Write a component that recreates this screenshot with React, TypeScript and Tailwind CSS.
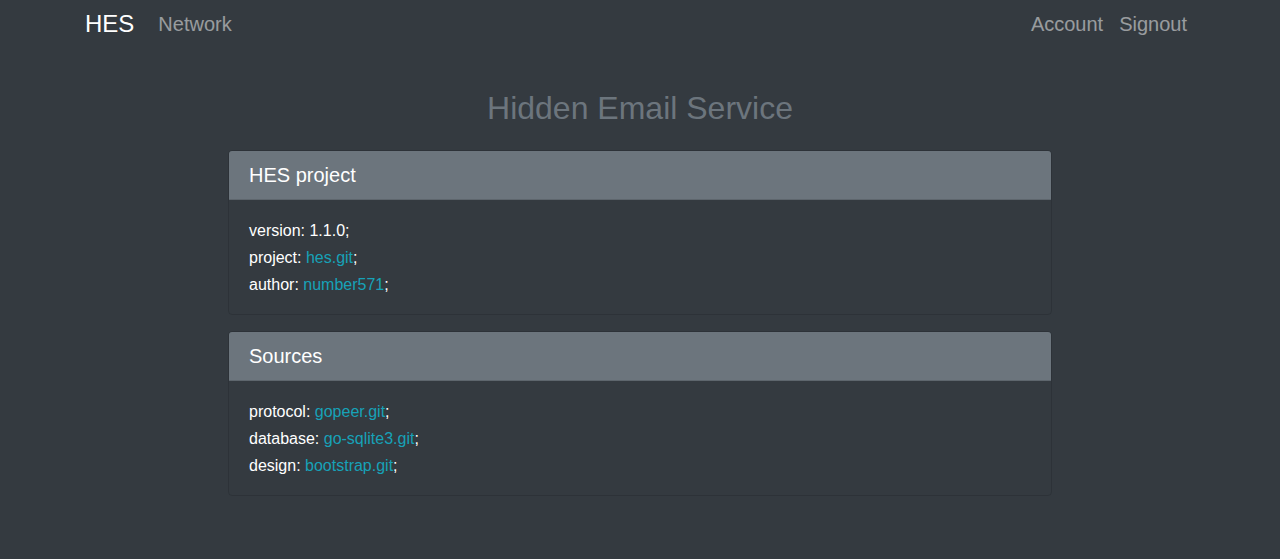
import React from "react";

const font = { fontFamily: '"Liberation Sans", Arial, sans-serif' };

function Card({ title, rows }: { title: string; rows: { k: string; v: string; link?: boolean }[] }) {
  return (
    <div className="w-[824px] mx-auto rounded-[4px] border border-[rgba(0,0,0,0.125)] overflow-hidden">
      <div className="bg-[#6c757d] h-[49px] px-5 flex items-center text-[20px] leading-[24px] text-white border-b border-[rgba(0,0,0,0.125)]">
        {title}
      </div>
      <div className="px-5 pt-[17px] pb-[16px] text-[16px] leading-[27px] text-white">
        {rows.map((r) => (
          <div key={r.k}>
            {r.k}: {r.link ? <a className="text-[#17a2b8]">{r.v}</a> : r.v};
          </div>
        ))}
      </div>
    </div>
  );
}

export default function App() {
  return (
    <div className="min-h-[559px] bg-[#343a40]" style={font}>
      <nav className="w-[1140px] mx-auto px-[15px] h-[48px] flex items-center">
        <span className="text-[24px] text-white mr-4">HES</span>
        <span className="px-2 text-[20px] text-[rgba(255,255,255,0.5)]">Network</span>
        <div className="ml-auto flex">
          <span className="px-2 text-[20px] text-[rgba(255,255,255,0.5)]">Account</span>
          <span className="px-2 text-[20px] text-[rgba(255,255,255,0.5)]">Signout</span>
        </div>
      </nav>
      <h2 className="mt-[41px] text-center text-[32px] leading-[38px] text-[#6c757d] mb-[23px]">
        Hidden Email Service
      </h2>
      <div className="flex flex-col gap-4">
        <Card
          title="HES project"
          rows={[
            { k: "version", v: "1.1.0" },
            { k: "project", v: "hes.git", link: true },
            { k: "author", v: "number571", link: true },
          ]}
        />
        <Card
          title="Sources"
          rows={[
            { k: "protocol", v: "gopeer.git", link: true },
            { k: "database", v: "go-sqlite3.git", link: true },
            { k: "design", v: "bootstrap.git", link: true },
          ]}
        />
      </div>
    </div>
  );
}
